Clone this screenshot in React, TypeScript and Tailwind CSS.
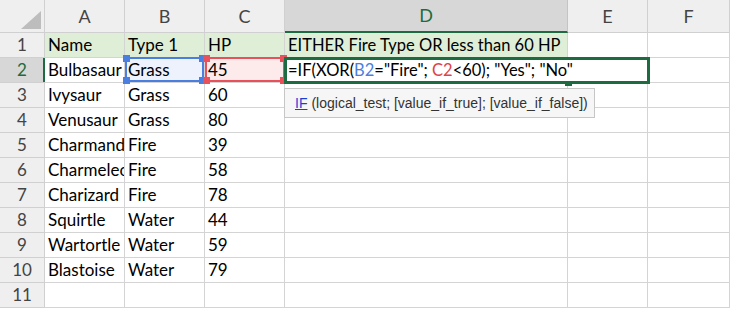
const cols = [
  { key: "A", w: "w-[80px]" },
  { key: "B", w: "w-[80px]" },
  { key: "C", w: "w-[80px]" },
  { key: "D", w: "w-[283px]" },
  { key: "E", w: "w-[80px]" },
  { key: "F", w: "w-[82px]" },
];

const rows: string[][] = [
  ["Name", "Type 1", "HP", "EITHER Fire Type OR less than 60 HP"],
  ["Bulbasaur", "Grass", "45", ""],
  ["Ivysaur", "Grass", "60"],
  ["Venusaur", "Grass", "80"],
  ["Charmander", "Fire", "39"],
  ["Charmeleon", "Fire", "58"],
  ["Charizard", "Fire", "78"],
  ["Squirtle", "Water", "44"],
  ["Wartortle", "Water", "59"],
  ["Blastoise", "Water", "79"],
  [],
];

function Handle({ className }: { className: string }) {
  return <div className={"absolute w-[7px] h-[7px] " + className} />;
}

export default function App() {
  return (
    <div className="relative w-[730px] h-[310px] overflow-hidden bg-white text-black font-['Lato',sans-serif]">
      {/* column headers */}
      <div className="flex h-[33px]">
        <div className="relative w-[45px] shrink-0 bg-[#efefef] border-r border-b border-[#d0d0d0]">
          <div className="absolute right-[3px] bottom-[3px] w-0 h-0 border-l-[20px] border-l-transparent border-b-[18px] border-b-[#bdbdbd]" />
        </div>
        {cols.map((c) => (
          <div
            key={c.key}
            className={
              c.w +
              " shrink-0 flex items-center justify-center border-r text-[18px] " +
              (c.key === "D"
                ? "bg-[#d7d7d7] text-[#1e6b41] border-b-2 border-b-[#1e6b41] border-r-[#c4c4c4]"
                : "bg-[#efefef] text-[#444] border-b border-[#d0d0d0]")
            }
          >
            {c.key}
          </div>
        ))}
      </div>

      {rows.map((r, i) => (
        <div key={i} className="flex h-[25px]">
          <div
            className={
              "w-[45px] shrink-0 flex items-center justify-center border-r border-b border-[#d0d0d0] text-[17px] " +
              (i === 1 ? "bg-[#d7d7d7] text-[#1e6b41]" : "bg-[#efefef] text-[#444]")
            }
          >
            {i + 1}
          </div>
          {cols.map((c, j) => (
            <div
              key={c.key}
              className={
                c.w +
                " shrink-0 flex items-center pl-[3px] border-r border-b border-[#d4d4d4] whitespace-nowrap overflow-hidden " +
                (j === 3 ? "text-[16.5px] " : "text-[17px] ") +
                (i === 0 && j < 4 ? "bg-[#dfeed6]" : "") +
                (i === 1 && j === 1 ? "bg-[#eef2fc]" : "") +
                (i === 1 && j === 2 ? "bg-[#fdeaea]" : "")
              }
            >
              {r[j] ?? ""}
            </div>
          ))}
        </div>
      ))}

      {/* row 2 active marker */}
      <div className="absolute left-[43px] top-[58px] w-[2px] h-[24px] bg-[#1e6b41]" />

      {/* B2 reference */}
      <div className="absolute left-[125px] top-[57px] w-[79px] h-[25px] border-2 border-[#4a7fe0]">
        <Handle className="-left-[4px] -top-[4px] bg-[#4a7fe0]" />
        <Handle className="-right-[4px] -top-[4px] bg-[#4a7fe0]" />
        <Handle className="-left-[4px] -bottom-[4px] bg-[#4a7fe0]" />
        <Handle className="-right-[4px] -bottom-[4px] bg-[#4a7fe0]" />
      </div>

      {/* C2 reference */}
      <div className="absolute left-[205px] top-[57px] w-[80px] h-[25px] border-2 border-[#e8505b]">
        <Handle className="-left-[4px] -top-[4px] bg-[#e8505b]" />
        <Handle className="-right-[4px] -top-[4px] bg-[#e8505b]" />
        <Handle className="-left-[4px] -bottom-[4px] bg-[#e8505b]" />
        <Handle className="-right-[4px] -bottom-[4px] bg-[#e8505b]" />
      </div>

      {/* edit cell */}
      <div className="absolute left-[284px] top-[57px] w-[366px] h-[27px] bg-white border-[3px] border-[#1e6b41] flex items-center pl-[1px] text-[16.5px] whitespace-nowrap">
        <span>=IF(XOR(</span>
        <span className="text-[#4a7fe0]">B2</span>
        <span>="Fire";&nbsp;</span>
        <span className="text-[#e0424a]">C2</span>
        <span>&lt;60); "Yes"; "No"</span>
      </div>
      <div className="absolute left-[565px] top-[83px] w-[7px] h-[3px] bg-[#1e6b41]" />

      {/* tooltip */}
      <div className="absolute left-[284px] top-[88px] w-[311px] h-[30px] bg-[#f6f6f6] border border-[#c6c6c6] flex items-center pl-[10px] text-[14px] text-[#333] font-['Liberation_Sans',sans-serif] whitespace-nowrap">
        <span className="text-[#1a3fd6] underline mr-[4px]">IF</span>
        <span>(logical_test; [value_if_true]; [value_if_false])</span>
      </div>
    </div>
  );
}
